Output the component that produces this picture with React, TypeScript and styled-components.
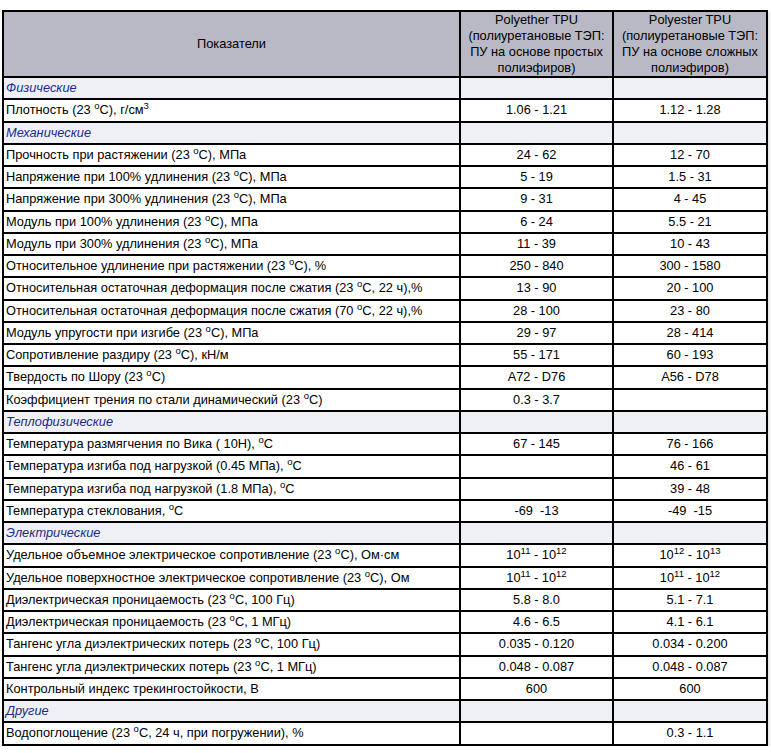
import React from "react";
import styled, { createGlobalStyle } from "styled-components";

const Global = createGlobalStyle`
  html, body { margin: 0; padding: 0; background: #fff; }
  body { font-family: "Liberation Sans", Arial, sans-serif; font-size: 12.8px; color: #000; }
`;

const Page = styled.div`
  padding: 10px 0 0 2px;
`;

const Table = styled.table`
  width: 764px;
  border-collapse: collapse;
  border: 2px solid #000;
  table-layout: fixed;
  box-shadow: 2px 2px 2px rgba(0, 0, 0, 0.1);
`;

const HeadCell = styled.th`
  background: #b9b9c6;
  border: 2px solid #000;
  font-weight: normal;
  text-align: center;
  vertical-align: middle;
  padding: 0 2px;
  line-height: 16px;
  height: 60px;
`;

const Cell = styled.td<{ $center?: boolean }>`
  border: 2px solid #000;
  padding: 0 2px;
  text-align: ${(p) => (p.$center ? "center" : "left")};
  vertical-align: middle;
  height: 20.25px;
  line-height: 16px;
  white-space: nowrap;
`;

const CatCell = styled.td`
  border: 2px solid #000;
  background: #eef0f5;
  padding: 0 2px;
  height: 20.25px;
  line-height: 16px;
  font-style: italic;
  color: #1c2a8c;
`;

const Sup = styled.sup`
  font-size: 9.5px;
  vertical-align: 5px;
  line-height: 0;
`;

type Row =
  | { cat: string }
  | { label: React.ReactNode; a: React.ReactNode; b: React.ReactNode };

const o = <Sup>o</Sup>;
const t23 = <>23 {o}C</>;
const pw = (x: string, y: string) => (
  <>
    10<Sup>{x}</Sup> - 10<Sup>{y}</Sup>
  </>
);

const rows: Row[] = [
  { cat: "Физические" },
  { label: <>Плотность ({t23}), г/см<Sup>3</Sup></>, a: "1.06 - 1.21", b: "1.12 - 1.28" },
  { cat: "Механические" },
  { label: <>Прочность при растяжении ({t23}), МПа</>, a: "24 - 62", b: "12 - 70" },
  { label: <>Напряжение при 100% удлинения ({t23}), МПа</>, a: "5 - 19", b: "1.5 - 31" },
  { label: <>Напряжение при 300% удлинения ({t23}), МПа</>, a: "9 - 31", b: "4 - 45" },
  { label: <>Модуль при 100% удлинения ({t23}), МПа</>, a: "6 - 24", b: "5.5 - 21" },
  { label: <>Модуль при 300% удлинения ({t23}), МПа</>, a: "11 - 39", b: "10 - 43" },
  { label: <>Относительное удлинение при растяжении ({t23}), %</>, a: "250 - 840", b: "300 - 1580" },
  { label: <>Относительная остаточная деформация после сжатия ({t23}, 22 ч),%</>, a: "13 - 90", b: "20 - 100" },
  { label: <>Относительная остаточная деформация после сжатия (70 {o}C, 22 ч),%</>, a: "28 - 100", b: "23 - 80" },
  { label: <>Модуль упругости при изгибе ({t23}), МПа</>, a: "29 - 97", b: "28 - 414" },
  { label: <>Сопротивление раздиру ({t23}), кН/м</>, a: "55 - 171", b: "60 - 193" },
  { label: <>Твердость по Шору ({t23})</>, a: "A72 - D76", b: "A56 - D78" },
  { label: <>Коэффициент трения по стали динамический ({t23})</>, a: "0.3 - 3.7", b: "" },
  { cat: "Теплофизические" },
  { label: <>Температура размягчения по Вика ( 10Н), {o}C</>, a: "67 - 145", b: "76 - 166" },
  { label: <>Температура изгиба под нагрузкой (0.45 МПа), {o}C</>, a: "", b: "46 - 61" },
  { label: <>Температура изгиба под нагрузкой (1.8 МПа), {o}C</>, a: "", b: "39 - 48" },
  { label: <>Температура стеклования, {o}C</>, a: "-69  -13", b: "-49  -15" },
  { cat: "Электрические" },
  { label: <>Удельное объемное электрическое сопротивление ({t23}), Ом·см</>, a: pw("11", "12"), b: pw("12", "13") },
  { label: <>Удельное поверхностное электрическое сопротивление ({t23}), Ом</>, a: pw("11", "12"), b: pw("11", "12") },
  { label: <>Диэлектрическая проницаемость ({t23}, 100 Гц)</>, a: "5.8 - 8.0", b: "5.1 - 7.1" },
  { label: <>Диэлектрическая проницаемость ({t23}, 1 МГц)</>, a: "4.6 - 6.5", b: "4.1 - 6.1" },
  { label: <>Тангенс угла диэлектрических потерь ({t23}, 100 Гц)</>, a: "0.035 - 0.120", b: "0.034 - 0.200" },
  { label: <>Тангенс угла диэлектрических потерь ({t23}, 1 МГц)</>, a: "0.048 - 0.087", b: "0.048 - 0.087" },
  { label: <>Контрольный индекс трекингостойкости, В</>, a: "600", b: "600" },
  { cat: "Другие" },
  { label: <>Водопоглощение ({t23}, 24 ч, при погружении), %</>, a: "", b: "0.3 - 1.1" },
];

const Value = styled.span`
  white-space: pre;
`;

export default function App() {
  return (
    <Page>
      <Global />
      <Table>
        <colgroup>
          <col style={{ width: 457 }} />
          <col style={{ width: 153 }} />
          <col style={{ width: 154 }} />
        </colgroup>
        <thead>
          <tr>
            <HeadCell>Показатели</HeadCell>
            <HeadCell>
              Polyether TPU
              <br />
              (полиуретановые ТЭП:
              <br />
              ПУ на основе простых полиэфиров)
            </HeadCell>
            <HeadCell>
              Polyester TPU
              <br />
              (полиуретановые ТЭП:
              <br />
              ПУ на основе сложных полиэфиров)
            </HeadCell>
          </tr>
        </thead>
        <tbody>
          {rows.map((r, i) =>
            "cat" in r ? (
              <tr key={i}>
                <CatCell>{r.cat}</CatCell>
                <CatCell />
                <CatCell />
              </tr>
            ) : (
              <tr key={i}>
                <Cell>{r.label}</Cell>
                <Cell $center>
                  <Value>{r.a}</Value>
                </Cell>
                <Cell $center>
                  <Value>{r.b}</Value>
                </Cell>
              </tr>
            )
          )}
        </tbody>
      </Table>
    </Page>
  );
}
